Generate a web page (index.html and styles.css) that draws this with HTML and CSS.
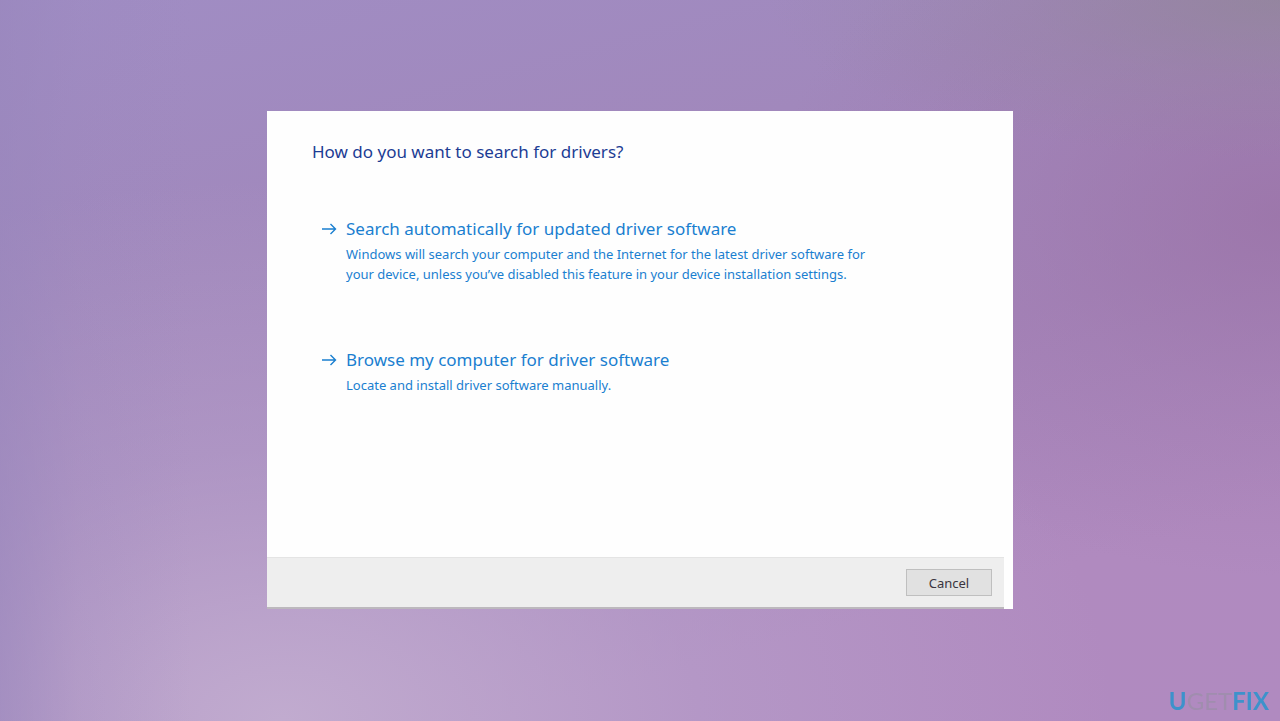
FILE: index.html
```html
<!DOCTYPE html>
<html lang="en">
<head>
<meta charset="utf-8">
<meta name="viewport" content="width=device-width, initial-scale=1">
<title>Update Drivers</title>
<link rel="stylesheet" href="styles.css">
</head>
<body class="desktop">
<main class="dialog" role="dialog" aria-labelledby="dialog-title">
  <div class="dialog-body">
    <h1 class="dialog-title" id="dialog-title">How do you want to search for drivers?</h1>
    <div class="options">
      <button class="option" type="button">
        <svg class="option-arrow" viewBox="0 0 16 24" aria-hidden="true"><path d="M1 12H14.500M9.500 7L14.500 12L9.500 17"/></svg>
        <span class="option-text">
          <span class="option-title">Search automatically for updated driver software</span>
          <span class="option-desc">Windows will search your computer and the Internet for the latest driver software for<br>your device, unless you’ve disabled this feature in your device installation settings.</span>
        </span>
      </button>
      <button class="option" type="button">
        <svg class="option-arrow" viewBox="0 0 16 24" aria-hidden="true"><path d="M1 12H14.500M9.500 7L14.500 12L9.500 17"/></svg>
        <span class="option-text">
          <span class="option-title">Browse my computer for driver software</span>
          <span class="option-desc">Locate and install driver software manually.</span>
        </span>
      </button>
    </div>
  </div>
  <footer class="dialog-footer">
    <button class="cancel" type="button">Cancel</button>
  </footer>
</main>
<div class="brand"><span class="brand-blue">U</span><span class="brand-grey">GET</span><span class="brand-blue">FIX</span></div>
</body>
</html>
```
FILE: styles.css
```css
* {
  box-sizing: border-box;
}

.desktop {
  margin: 0;
  min-height: 100vh;
  padding-bottom: 1px;
  display: flex;
  align-items: center;
  justify-content: center;
  font-family: "Noto Sans", "Open Sans", sans-serif;
  background:
    radial-gradient(ellipse 40% 22% at 100% 0%, rgba(146, 134, 154, 0.8), rgba(146, 134, 154, 0.3) 50%, rgba(146, 134, 154, 0) 100%),
    radial-gradient(ellipse 40% 50% at 100% 30%, rgba(154, 114, 166, 0.75), rgba(154, 114, 166, 0.3) 50%, rgba(154, 114, 166, 0) 100%),
    linear-gradient(90deg, rgba(152, 134, 188, 0.6), rgba(152, 134, 188, 0.2) 6%, rgba(152, 134, 188, 0) 15%),
    radial-gradient(ellipse 65% 75% at 22% 100%, rgba(194, 173, 208, 0.95), rgba(184, 164, 205, 0.5) 50%, rgba(168, 150, 198, 0) 100%),
    linear-gradient(165deg, #a08dc4 0%, #a188bc 30%, #a585ba 55%, #b08abf 80%, #b08ac0 100%);
}

.dialog {
  display: flex;
  flex-direction: column;
  width: 100%;
  max-width: 746px;
  min-height: 498px;
  background: #fefefe;
}

.dialog-body {
  flex: 1;
  padding: 29px 45px;
}

.dialog-title {
  margin: 0;
  font-size: 17px;
  line-height: 24px;
  font-weight: 400;
  color: #1c3c94;
}

.options {
  display: flex;
  flex-direction: column;
  gap: 64px;
  padding: 53px 0 0 9px;
}

.option {
  display: flex;
  gap: 9px;
  width: 100%;
  padding: 0;
  border: 0;
  background: none;
  font: inherit;
  text-align: left;
  color: #1a7fd0;
}

.option-arrow {
  flex: none;
  width: 16px;
  height: 24px;
  fill: none;
  stroke: currentColor;
  stroke-width: 1.4;
}

.option-text {
  display: flex;
  flex-direction: column;
  gap: 3px;
}

.option-title {
  font-size: 17px;
  line-height: 24px;
}

.option-desc {
  font-size: 13px;
  line-height: 20px;
}

.dialog-footer {
  display: flex;
  justify-content: flex-end;
  margin-right: 9px;
  padding: 11px 12px;
  background: #eeeeee;
  border-top: 1px solid #e4e4e4;
  border-bottom: 2px solid #bcb8bd;
}

.cancel {
  width: 86px;
  height: 27px;
  padding: 0;
  border: 1px solid #bfbfbf;
  background: #e1e1e1;
  font: inherit;
  font-size: 13px;
  line-height: 24px;
  color: #3a353e;
}

.brand {
  position: fixed;
  right: 11px;
  bottom: 6px;
  font-family: Lato, sans-serif;
  font-size: 24px;
  line-height: 28px;
}

.brand-blue {
  font-weight: 700;
  color: #3d92cb;
}

.brand-grey {
  color: #a08dae;
}
```
